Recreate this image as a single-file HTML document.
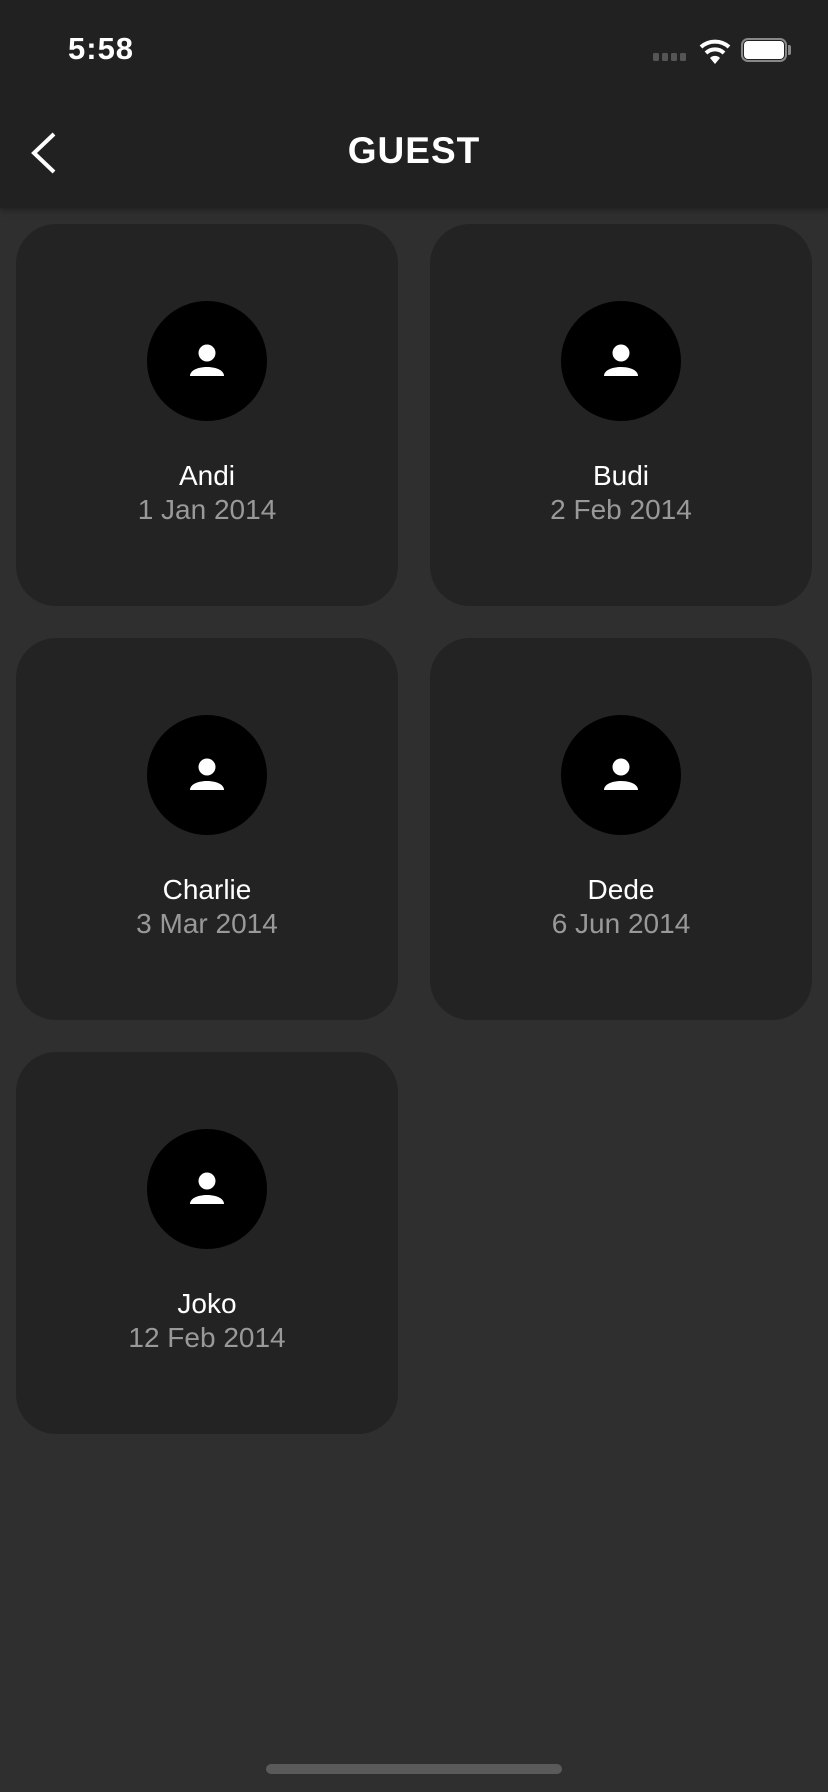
<!DOCTYPE html>
<html><head><style>
body{margin:0;width:828px;height:1792px;background:#2f2f2f;font-family:"Liberation Sans",sans-serif;position:relative;overflow:hidden}
.hdr{position:absolute;left:0;top:0;width:828px;height:208px;background:#212121;box-shadow:0 2px 6px rgba(0,0,0,.35)}
.time{position:absolute;left:68px;top:31px;color:#fff;font-size:31px;font-weight:600;letter-spacing:1px}
.title{position:absolute;left:0;width:828px;top:130px;text-align:center;color:#fff;font-size:37px;font-weight:600;letter-spacing:1px}
.card{position:absolute;width:382px;height:382px;background:#232323;border-radius:40px}
.av{position:absolute;left:131px;top:77px;width:120px;height:120px;border-radius:50%;background:#000}
.av svg{position:absolute;left:40px;top:40px}
.nm{position:absolute;left:0;width:382px;top:236px;text-align:center;color:#fff;font-size:28px}
.dt{position:absolute;left:0;width:382px;top:270px;text-align:center;color:#999;font-size:28px}
</style></head><body>
<div class="hdr">
<div class="time">5:58</div>
<svg style="position:absolute;left:650px;top:50px" width="45" height="14">
<g fill="#555"><rect x="3" y="3" width="6" height="8" rx="1.5"/><rect x="12" y="3" width="6" height="8" rx="1.5"/><rect x="21" y="3" width="6" height="8" rx="1.5"/><rect x="30" y="3" width="6" height="8" rx="1.5"/></g>
</svg>
<svg style="position:absolute;left:698px;top:36px" width="36" height="28">
<path d="M3 11 a21 21 0 0 1 28 0" stroke="#fff" stroke-width="4" fill="none"/>
<path d="M8 17 a13 13 0 0 1 18 0" stroke="#fff" stroke-width="4" fill="none"/>
<path d="M12 22 l5 6 l5 -6 a7 7 0 0 0 -10 0z" fill="#fff"/>
</svg>
<div style="position:absolute;left:741px;top:38px;width:46px;height:24px;border:2px solid #888;border-radius:7px;box-sizing:border-box"></div>
<div style="position:absolute;left:744px;top:41px;width:40px;height:18px;background:#fff;border-radius:4px"></div>
<div style="position:absolute;left:788px;top:45px;width:3px;height:10px;background:#888;border-radius:0 2px 2px 0"></div>
<svg style="position:absolute;left:18px;top:130px" width="40" height="46"><path d="M36 4 L16 23 L36 42" stroke="#fff" stroke-width="4" fill="none"/></svg>
<div class="title">GUEST</div>
</div>

<div class="card" style="left:16px;top:224px"><div class="av"><svg width="40" height="40" viewBox="0 0 40 40"><circle cx="20" cy="12" r="8.5" fill="#fff"/><path d="M3 35 C3 23 37 23 37 35 Z" fill="#fff"/></svg></div><div class="nm">Andi</div><div class="dt">1 Jan 2014</div></div>
<div class="card" style="left:430px;top:224px"><div class="av"><svg width="40" height="40" viewBox="0 0 40 40"><circle cx="20" cy="12" r="8.5" fill="#fff"/><path d="M3 35 C3 23 37 23 37 35 Z" fill="#fff"/></svg></div><div class="nm">Budi</div><div class="dt">2 Feb 2014</div></div>
<div class="card" style="left:16px;top:638px"><div class="av"><svg width="40" height="40" viewBox="0 0 40 40"><circle cx="20" cy="12" r="8.5" fill="#fff"/><path d="M3 35 C3 23 37 23 37 35 Z" fill="#fff"/></svg></div><div class="nm">Charlie</div><div class="dt">3 Mar 2014</div></div>
<div class="card" style="left:430px;top:638px"><div class="av"><svg width="40" height="40" viewBox="0 0 40 40"><circle cx="20" cy="12" r="8.5" fill="#fff"/><path d="M3 35 C3 23 37 23 37 35 Z" fill="#fff"/></svg></div><div class="nm">Dede</div><div class="dt">6 Jun 2014</div></div>
<div class="card" style="left:16px;top:1052px"><div class="av"><svg width="40" height="40" viewBox="0 0 40 40"><circle cx="20" cy="12" r="8.5" fill="#fff"/><path d="M3 35 C3 23 37 23 37 35 Z" fill="#fff"/></svg></div><div class="nm">Joko</div><div class="dt">12 Feb 2014</div></div>

<div style="position:absolute;left:266px;top:1764px;width:296px;height:10px;border-radius:5px;background:#5a5a5a"></div>
</body></html>
